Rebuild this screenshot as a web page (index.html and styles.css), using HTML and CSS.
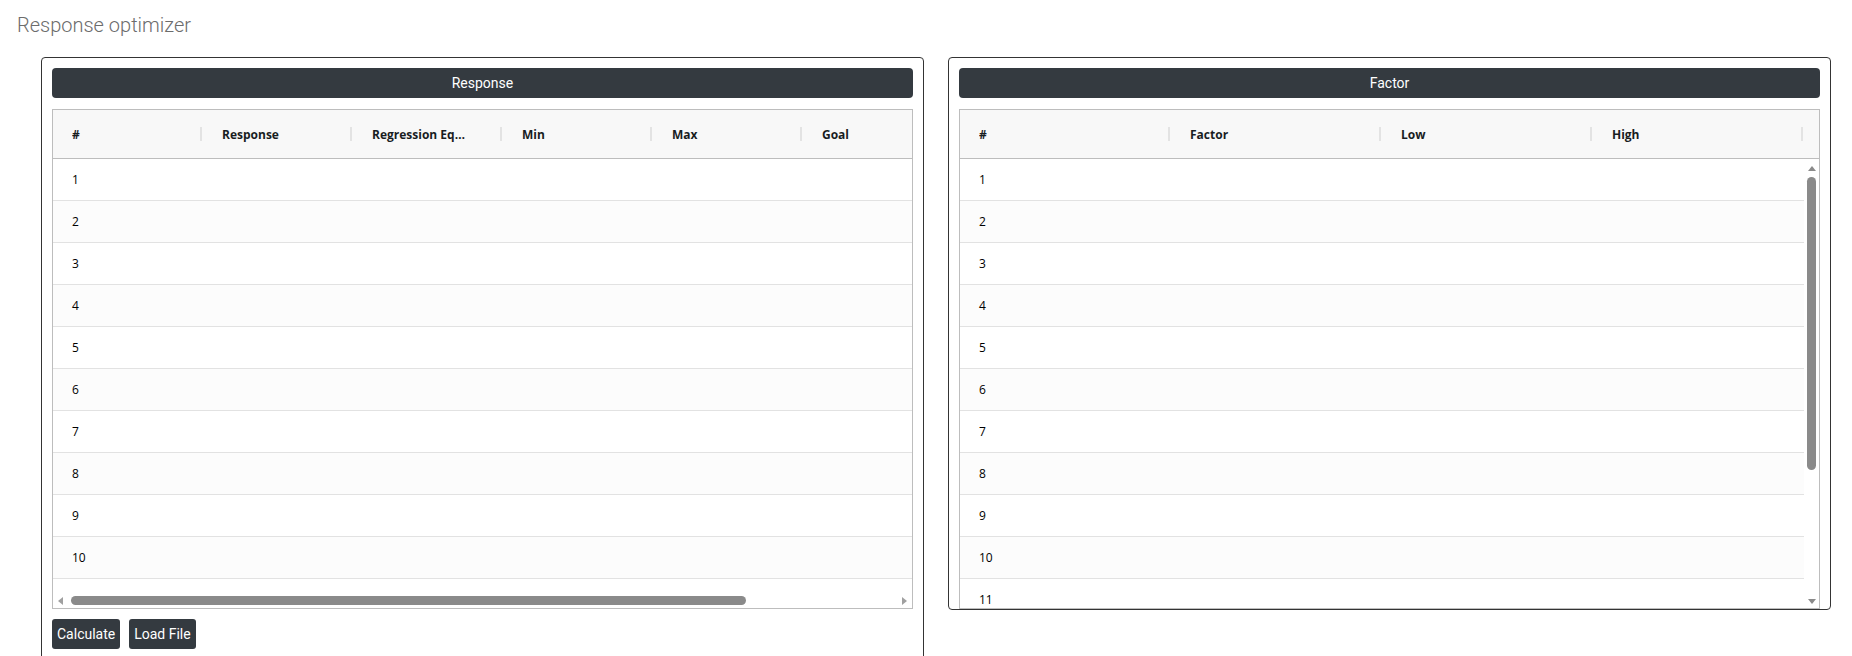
FILE: index.html
```html
<!DOCTYPE html>
<html lang="en">
<head>
<meta charset="utf-8">
<title>Response optimizer</title>
<link rel="stylesheet" href="styles.css">
</head>
<body>
<div class="page">
  <h1 class="title">Response optimizer</h1>
  <div class="panels">
    <section class="panel panel-left">
      <div class="panel-head">Response</div>
      <div class="grid">
        <div class="grid-head">
          <div class="hcell"><span class="label">#</span><span class="sep"></span></div>
          <div class="hcell"><span class="label">Response</span><span class="sep"></span></div>
          <div class="hcell"><span class="label">Regression Equation</span><span class="sep"></span></div>
          <div class="hcell"><span class="label">Min</span><span class="sep"></span></div>
          <div class="hcell"><span class="label">Max</span><span class="sep"></span></div>
          <div class="hcell"><span class="label">Goal</span><span class="sep"></span></div>
          <div class="hcell"><span class="label"></span><span class="sep"></span></div>
        </div>
        <div class="grid-body grid-body-h">
          <div class="viewport">
            <div class="rows rows-wide">
              <div class="row"><div class="cell">1</div></div>
              <div class="row"><div class="cell">2</div></div>
              <div class="row"><div class="cell">3</div></div>
              <div class="row"><div class="cell">4</div></div>
              <div class="row"><div class="cell">5</div></div>
              <div class="row"><div class="cell">6</div></div>
              <div class="row"><div class="cell">7</div></div>
              <div class="row"><div class="cell">8</div></div>
              <div class="row"><div class="cell">9</div></div>
              <div class="row"><div class="cell">10</div></div>
            </div>
          </div>
          <div class="hscroll">
            <div class="arrow-box"><span class="tri tri-left"></span></div>
            <div class="htrack"><div class="hthumb"></div></div>
            <div class="arrow-box"><span class="tri tri-right"></span></div>
          </div>
        </div>
      </div>
      <div class="actions">
        <button class="btn" type="button">Calculate</button>
        <button class="btn" type="button">Load File</button>
      </div>
    </section>

    <section class="panel panel-right">
      <div class="panel-head">Factor</div>
      <div class="grid">
        <div class="grid-head">
          <div class="hcell hcell-f"><span class="label">#</span><span class="sep"></span></div>
          <div class="hcell hcell-f"><span class="label">Factor</span><span class="sep"></span></div>
          <div class="hcell hcell-f"><span class="label">Low</span><span class="sep"></span></div>
          <div class="hcell hcell-f"><span class="label">High</span><span class="sep"></span></div>
        </div>
        <div class="grid-body">
          <div class="viewport">
            <div class="rows">
              <div class="row"><div class="cell cell-f">1</div></div>
              <div class="row"><div class="cell cell-f">2</div></div>
              <div class="row"><div class="cell cell-f">3</div></div>
              <div class="row"><div class="cell cell-f">4</div></div>
              <div class="row"><div class="cell cell-f">5</div></div>
              <div class="row"><div class="cell cell-f">6</div></div>
              <div class="row"><div class="cell cell-f">7</div></div>
              <div class="row"><div class="cell cell-f">8</div></div>
              <div class="row"><div class="cell cell-f">9</div></div>
              <div class="row"><div class="cell cell-f">10</div></div>
              <div class="row"><div class="cell cell-f">11</div></div>
              <div class="row"><div class="cell cell-f">12</div></div>
            </div>
          </div>
          <div class="vscroll">
            <div class="arrow-box-v arrow-up"><span class="tri tri-up"></span></div>
            <div class="vtrack"><div class="vthumb"></div></div>
            <div class="arrow-box-v arrow-down"><span class="tri tri-down"></span></div>
          </div>
        </div>
      </div>
    </section>
  </div>
</div>
</body>
</html>
```

FILE: styles.css
```css
* {
  box-sizing: border-box;
}

body {
  margin: 0;
  background: #ffffff;
  font-family: Roboto, "Liberation Sans", sans-serif;
  color: #212529;
}

.title {
  margin: 0;
  padding: 13px 0 0 17px;
  font-size: 20px;
  line-height: 24px;
  font-weight: 300;
  color: #6c6c6c;
}

.panels {
  display: flex;
  align-items: flex-start;
  gap: 24px;
  padding: 20px 21px 0 41px;
}

.panel {
  flex: 1 1 0;
  min-width: 0;
  border: 1px solid #343434;
  border-radius: 4px;
  padding: 10px 10px 0 10px;
}

.panel-left {
  padding-bottom: 10px;
}

.panel-head {
  height: 30px;
  margin-bottom: 11px;
  background: #343a40;
  border-radius: 4px;
  color: #ffffff;
  font-size: 14px;
  display: flex;
  align-items: center;
  justify-content: center;
}

.grid {
  height: 500px;
  border: 1px solid #bdbdbd;
  display: flex;
  flex-direction: column;
  overflow: hidden;
  font-family: "Open Sans", "Noto Sans", sans-serif;
  font-size: 12px;
  color: #000000;
}

.grid-head {
  flex: none;
  height: 49px;
  display: flex;
  background: #f8f8f8;
  border-bottom: 1px solid #bdbdbd;
  overflow: hidden;
}

.hcell {
  flex: none;
  width: 150px;
  display: flex;
  align-items: center;
  padding-left: 19px;
  font-weight: 700;
  color: #181d1f;
}

.hcell-f {
  width: 211px;
}

.label {
  flex: 1;
  min-width: 0;
  overflow: hidden;
  white-space: nowrap;
  text-overflow: ellipsis;
  padding-right: 28px;
}

.sep {
  flex: none;
  width: 2px;
  height: 14px;
  margin-right: 1px;
  background: #e3e3e3;
}

.grid-body {
  flex: 1;
  min-height: 0;
  display: flex;
}

.grid-body-h {
  flex-direction: column;
}

.viewport {
  flex: 1;
  min-width: 0;
  min-height: 0;
  overflow: hidden;
}

.rows-wide {
  width: 1050px;
}

.row {
  height: 42px;
  display: flex;
  align-items: center;
  border-bottom: 1px solid #e2e2e2;
  background: #ffffff;
}

.row:nth-child(even) {
  background: #fcfcfc;
}

.cell {
  flex: none;
  width: 150px;
  padding-left: 19px;
}

.cell-f {
  width: 211px;
}

/* horizontal scrollbar */
.hscroll {
  flex: none;
  height: 15px;
  display: flex;
  align-items: center;
  background: #ffffff;
}

.arrow-box {
  flex: none;
  width: 15px;
  align-self: stretch;
  display: flex;
  align-items: center;
  justify-content: center;
}

.htrack {
  flex: 1;
  display: flex;
  align-items: center;
}

.hthumb {
  width: 675px;
  height: 9px;
  margin-left: 3px;
  border-radius: 5px;
  background: #8a8a8a;
}

/* vertical scrollbar */
.vscroll {
  flex: none;
  width: 15px;
  display: flex;
  flex-direction: column;
  align-items: center;
  background: #ffffff;
}

.arrow-box-v {
  flex: none;
  width: 15px;
  height: 17px;
  display: flex;
  justify-content: center;
}

.arrow-up {
  align-items: flex-end;
  padding-bottom: 5px;
}

.arrow-down {
  align-items: flex-start;
  padding-top: 8px;
}

.vtrack {
  flex: 1;
  display: flex;
  flex-direction: column;
  align-items: center;
}

.vthumb {
  width: 9px;
  height: 293px;
  margin-top: 1px;
  border-radius: 5px;
  background: #8a8a8a;
}

.tri {
  display: block;
  width: 0;
  height: 0;
}

.tri-left {
  border-top: 4px solid transparent;
  border-bottom: 4px solid transparent;
  border-right: 5px solid #a0a0a0;
}

.tri-right {
  border-top: 4px solid transparent;
  border-bottom: 4px solid transparent;
  border-left: 5px solid #a0a0a0;
}

.tri-up {
  border-left: 4px solid transparent;
  border-right: 4px solid transparent;
  border-bottom: 5px solid #8a8a8a;
}

.tri-down {
  border-left: 4px solid transparent;
  border-right: 4px solid transparent;
  border-top: 5px solid #8a8a8a;
}

/* buttons */
.actions {
  display: flex;
  gap: 9px;
  margin-top: 10px;
}

.btn {
  height: 30px;
  padding: 0 5px;
  border: 0;
  border-radius: 3px;
  background: #343a40;
  color: #ffffff;
  font-family: Roboto, "Liberation Sans", sans-serif;
  font-size: 14px;
  cursor: pointer;
}
```
